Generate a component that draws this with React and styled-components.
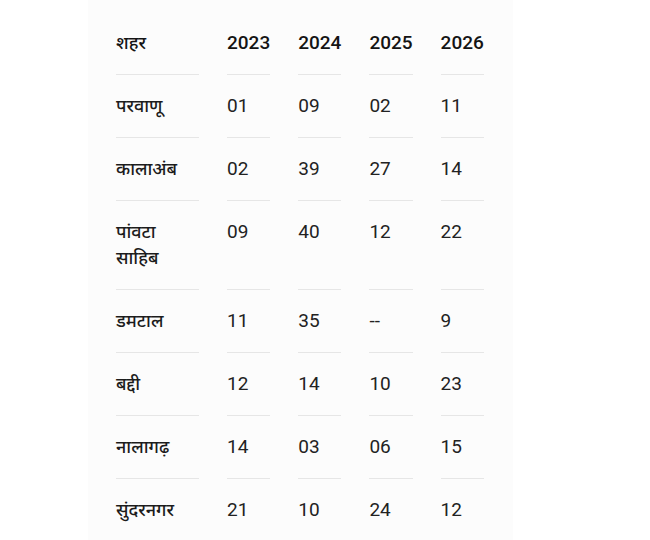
import styled, {createGlobalStyle} from 'styled-components';

const GlobalStyle = createGlobalStyle`
	html, body {
		margin: 0;
		padding: 0;
		background: #ffffff;
	}

	body {
		font-family: Roboto, "Noto Sans", "Noto Sans Devanagari", sans-serif;
		color: #1f1f1f;
	}
`;

const Panel = styled.section`
	box-sizing: border-box;
	width: 425px;
	min-height: 100vh;
	margin-left: 88px;
	padding-top: 12px;
	background: #fcfcfc;
`;

const Table = styled.table`
	border-collapse: separate;
	border-spacing: 28px 0;
	font-size: 19px;
	line-height: 26px;
`;

const HeadCell = styled.th`
	padding: 18px 0;
	text-align: left;
	vertical-align: top;
	font-weight: 500;
	font-size: ${({$wide}) => ($wide ? '18px' : '19px')};
	width: ${({$wide}) => ($wide ? '83px' : '43px')};
	border-bottom: 1px solid #e6e6e6;
	color: #141414;
`;

const CityCell = styled.td`
	padding: 18px 0;
	vertical-align: top;
	font-size: 18px;
	font-weight: 500;
	border-bottom: ${({$last}) => ($last ? 'none' : '1px solid #e6e6e6')};
	color: #1c1c1c;
`;

const ValueCell = styled.td`
	padding: 18px 0;
	vertical-align: top;
	font-weight: 400;
	border-bottom: ${({$last}) => ($last ? 'none' : '1px solid #e6e6e6')};
	color: #222222;
`;

const years = ['2023', '2024', '2025', '2026'];

const rows = [
	{city: 'परवाणू', values: ['01', '09', '02', '11']},
	{city: 'कालाअंब', values: ['02', '39', '27', '14']},
	{city: 'पांवटा साहिब', values: ['09', '40', '12', '22']},
	{city: 'डमटाल', values: ['11', '35', '--', '9']},
	{city: 'बद्दी', values: ['12', '14', '10', '23']},
	{city: 'नालागढ़', values: ['14', '03', '06', '15']},
	{city: 'सुंदरनगर', values: ['21', '10', '24', '12']},
];

const App = () => {
	return (
		<>
			<GlobalStyle />
			<Panel>
				<Table>
					<thead>
						<tr>
							<HeadCell $wide>शहर</HeadCell>
							{years.map(year => (
								<HeadCell key={year}>{year}</HeadCell>
							))}
						</tr>
					</thead>
					<tbody>
						{rows.map((row, i) => {
							const last = i === rows.length - 1;
							return (
								<tr key={row.city}>
									<CityCell $last={last}>{row.city}</CityCell>
									{row.values.map((value, j) => (
										<ValueCell key={j} $last={last}>{value}</ValueCell>
									))}
								</tr>
							);
						})}
					</tbody>
				</Table>
			</Panel>
		</>
	);
}

export default App;
